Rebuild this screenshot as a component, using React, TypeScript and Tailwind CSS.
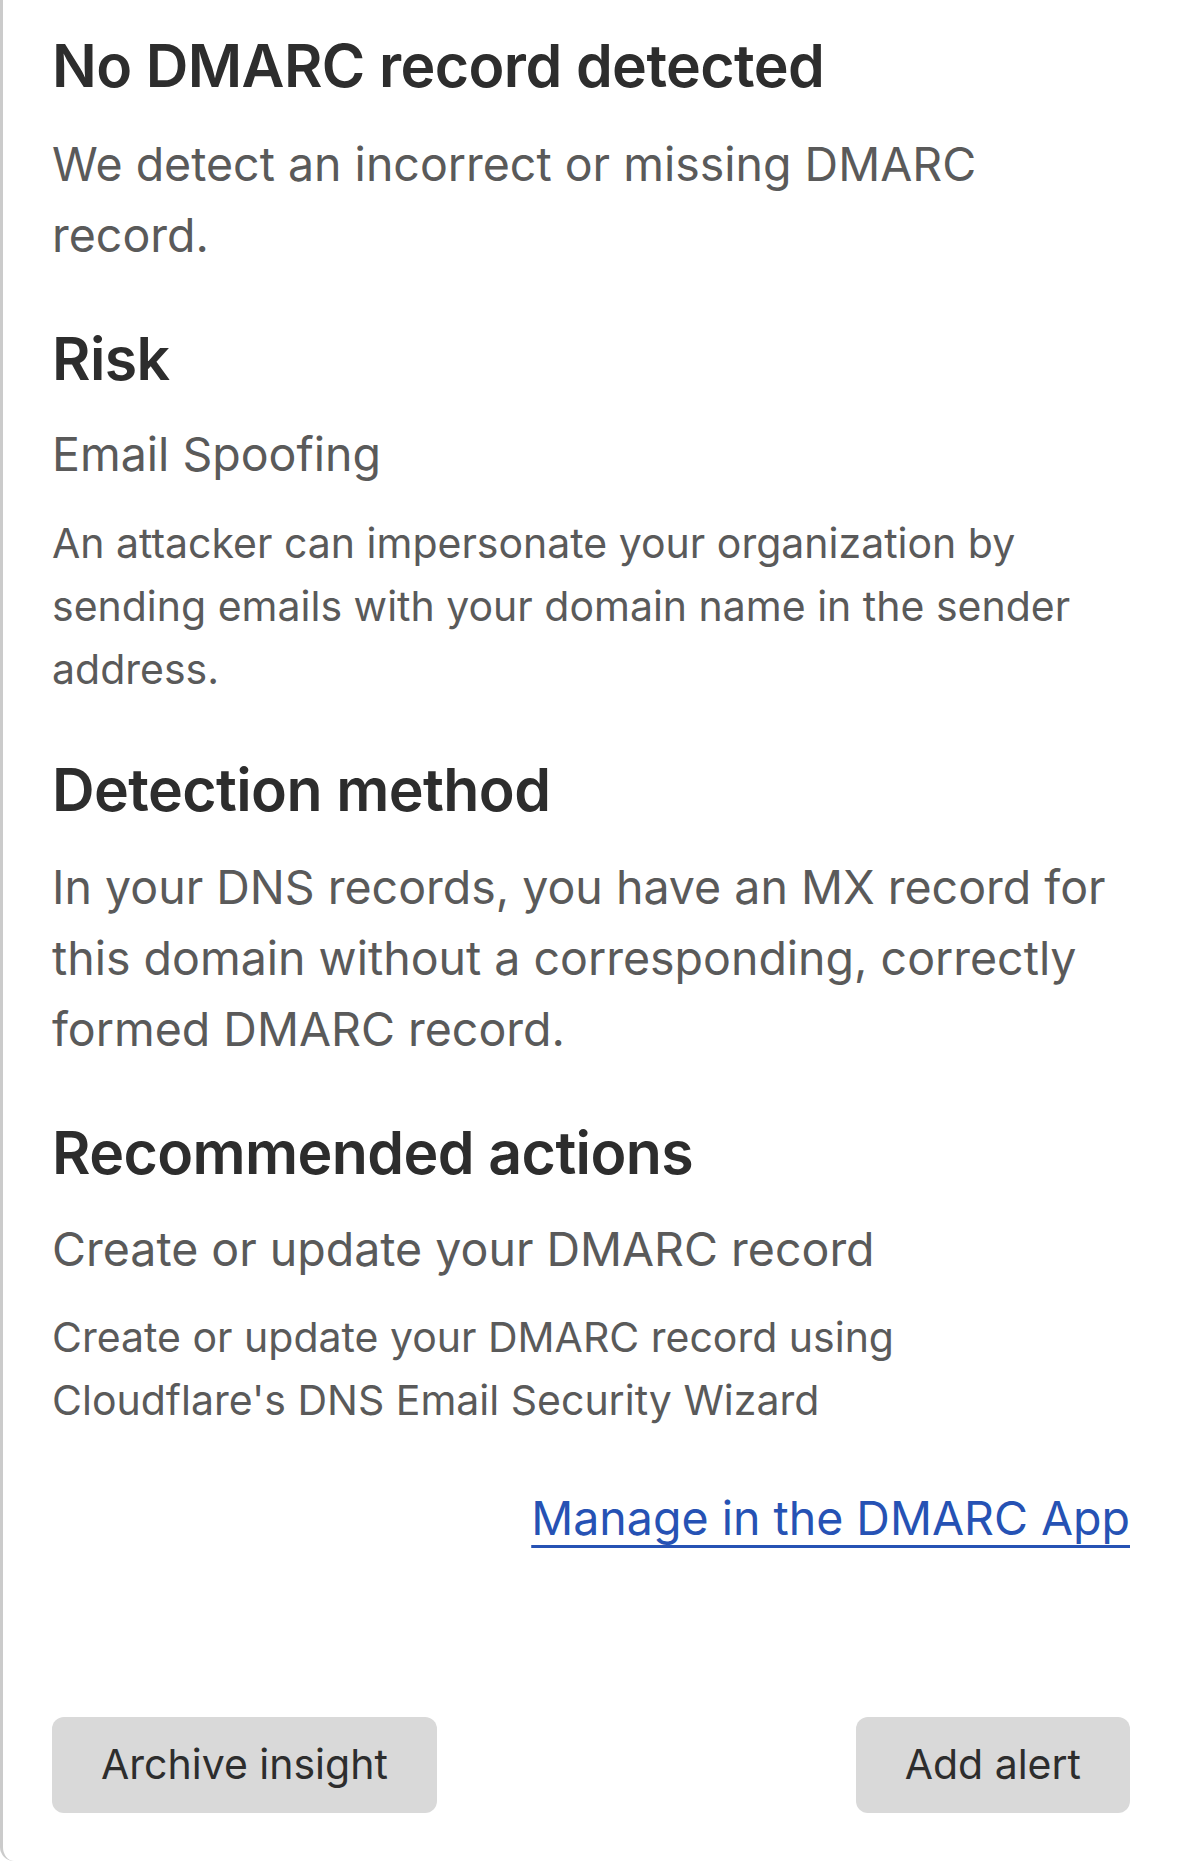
import React from 'react'

const sections = {
  title: 'No DMARC record detected',
  summary: 'We detect an incorrect or missing DMARC record.',
}

function Heading({ children, className = '' }: { children: React.ReactNode; className?: string }) {
  return (
    <h2 className={`text-[59px] leading-[72px] font-semibold tracking-[-0.6px] text-[#2d2d2d] ${className}`}>
      {children}
    </h2>
  )
}

export default function App() {
  return (
    <div className="w-[1179px] h-[1861px] bg-white font-['Inter','Noto_Sans',sans-serif]">
      <div className="h-full flex flex-col border-l-[3px] border-[#cbcbcb] rounded-bl-[14px] pl-[49px] pr-[49px] pt-[30px] pb-[48px]">
        <Heading>{sections.title}</Heading>
        <p className="mt-[27px] text-[46.5px] leading-[71px] text-[#5a5a5a] pr-[100px]">{sections.summary}</p>

        <Heading className="mt-[52px]">Risk</Heading>
        <p className="mt-[29px] text-[46.5px] leading-[60px] text-[#5a5a5a]">Email Spoofing</p>
        <p className="mt-[28px] text-[41px] leading-[63px] text-[#5a5a5a]">
          An attacker can impersonate your organization by sending emails with your domain name in the sender address.
        </p>

        <Heading className="mt-[53px]">Detection method</Heading>
        <p className="mt-[26px] text-[46.5px] leading-[71px] text-[#5a5a5a]">
          In your DNS records, you have an MX record for this domain without a corresponding, correctly formed DMARC
          record.
        </p>

        <Heading className="mt-[52px]">Recommended actions</Heading>
        <p className="mt-[30px] text-[46.5px] leading-[60px] text-[#5a5a5a]">Create or update your DMARC record</p>
        <p className="mt-[27px] text-[41px] leading-[63px] text-[#5a5a5a] pr-[200px]">
          Create or update your DMARC record using Cloudflare's DNS Email Security Wizard
        </p>

        <div className="mt-[56px] flex justify-end">
          <a
            href="#"
            className="text-[46.5px] leading-[60px] text-[#2652b4] underline decoration-[3px] underline-offset-[10px]"
          >
            Manage in the DMARC App
          </a>
        </div>

        <div className="mt-auto flex items-center justify-between">
          <button type="button" className="h-[96px] px-[49px] rounded-[12px] bg-[#d9d9d9] text-[41px] text-[#2d2d2d]">
            Archive insight
          </button>
          <button type="button" className="h-[96px] px-[49px] rounded-[12px] bg-[#d9d9d9] text-[41px] text-[#2d2d2d]">
            Add alert
          </button>
        </div>
      </div>
    </div>
  )
}
